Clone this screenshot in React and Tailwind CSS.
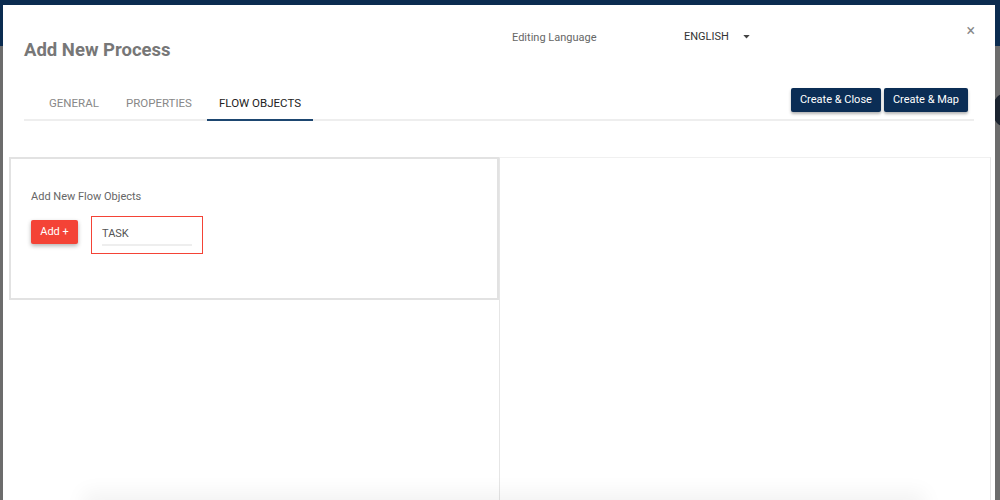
const tabs = ['General', 'Properties', 'Flow Objects'];

export default function App() {
  const active = 'Flow Objects';

  return (
    <div className="relative h-[500px] w-[1000px] overflow-hidden bg-[#6c6c6c] font-['Roboto',sans-serif]">
      {/* page behind the dialog */}
      <div className="h-[46px] bg-[#0b2c50]" />
      <div className="absolute right-[-14px] top-[94px] h-[32px] w-[20px] rounded-full bg-[#1c2430]" />

      {/* dialog */}
      <div className="absolute bottom-0 left-[3px] right-[5px] top-[5px] flex flex-col bg-white">
        <div className="flex h-[82px] items-start">
          <h1 className="ml-[21px] mt-[34px] w-[488px] text-[18.5px] font-bold leading-[22px] text-[#777]">Add New Process</h1>
          <div className="mt-[26px] w-[172px] text-[11px] leading-[14px] text-[#666]">Editing Language</div>
          <button className="mt-[25px] flex items-center text-[11px] leading-[14px] text-[#333]">
            ENGLISH
            <svg className="ml-[14px] h-[4px] w-[7px]" viewBox="0 0 8 5"><path d="M0 0h8L4 4.5z" fill="#444" /></svg>
          </button>
          <button className="ml-auto mr-[20px] mt-[18px] text-[16px] leading-[16px] text-[#888]">×</button>
        </div>

        <div className="mx-[21px] flex items-end border-b-2 border-[#eee]">
          <div className="ml-[13px] flex gap-[3px]">
            {tabs.map(t => (
              <div
                key={t}
                className={`-mb-[2px] flex h-[34px] items-center border-b-2 px-3 pt-[1px] text-[11.5px] uppercase ${t === active ? 'border-[#1d4670] text-[#222]' : 'border-transparent text-[#888]'}`}
              >
                {t}
              </div>
            ))}
          </div>
          <div className="mb-[7px] ml-auto mr-[6px] flex gap-[3px]">
            <button className="h-[24px] rounded-[2px] bg-[#0b2d55] px-[9px] text-[11px] text-white shadow-[0_2px_3px_rgba(0,0,0,0.3)]">Create &amp; Close</button>
            <button className="h-[24px] rounded-[2px] bg-[#0b2d55] px-[9px] text-[11px] text-white shadow-[0_2px_3px_rgba(0,0,0,0.3)]">Create &amp; Map</button>
          </div>
        </div>

        <div className="ml-[6px] mr-[4px] mt-[36px] flex flex-1 items-start">
          <div className="h-[143px] w-[490px] border-2 border-[#e2e2e2] pl-[20px] pt-[31px]">
            <div className="text-[11px] leading-[14px] text-[#666]">Add New Flow Objects</div>
            <div className="mt-[12px] flex items-start gap-[13px]">
              <button className="mt-[4px] h-[24px] w-[47px] rounded-[2px] bg-[#f44336] text-[11px] text-white shadow-[0_2px_4px_rgba(0,0,0,0.3)]">Add +</button>
              <div className="h-[38px] w-[112px] border border-[#f44336] px-[10px] pt-[10px]">
                <div className="border-b-2 border-[#eee] pb-[4px] text-[11px] leading-[13px] text-[#555]">TASK</div>
              </div>
            </div>
          </div>
          <div className="h-full flex-1 border-x border-t border-x-[#e6e6e6] border-t-[#f0f0f0]" />
        </div>

        <div className="absolute bottom-[-30px] left-[80px] right-[70px] h-[30px] shadow-[0_-8px_20px_rgba(0,0,0,0.05)]" />
      </div>
    </div>
  );
}
